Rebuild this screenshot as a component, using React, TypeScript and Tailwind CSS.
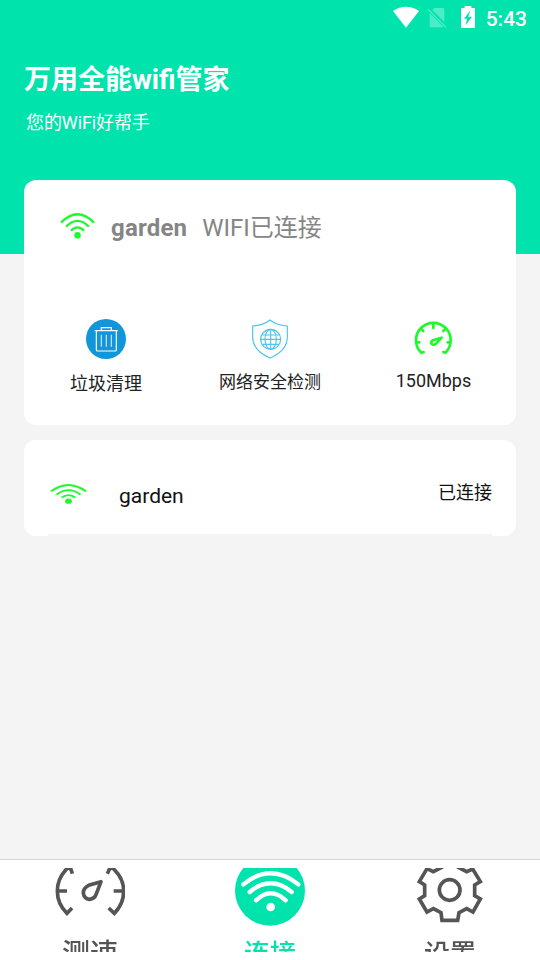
import type { ReactNode } from "react";

function StatusBar() {
  return (
    <div className="flex h-9 items-start justify-end pr-[13px] pt-[6px] text-white">
      <svg className="h-[22px] w-[26px]" viewBox="0 0 78 66">
        <path d="M0 15Q39-10 78 15L39 65Z" fill="currentColor" />
      </svg>
      <svg className="ml-[8px] h-[22px] w-5" viewBox="0 0 60 66">
        <path d="M16 12L22 6H48Q52 6 52 10V48ZM8 21L49 62Q48 64 46 64H11Q8 64 8 61Z" fill="#4decc8" />
        <path d="M3 10L58 65" stroke="#4decc8" strokeWidth="4" />
      </svg>
      <svg className="ml-[14px] h-[22px] w-[14px]" viewBox="0 0 42 66">
        <path d="M0 6H11V0H31V6H42V66H0Z" fill="currentColor" />
        <path d="M28 13L9 38H18L14 58L33 32H22Z" fill="#00e3ac" />
      </svg>
      <span className="ml-[11px] mt-[1px] text-[21px] font-medium leading-6">5:43</span>
    </div>
  );
}

function WifiIcon({ className }: { className: string }) {
  return (
    <svg className={className} viewBox="0 0 108 78" preserveAspectRatio="none" fill="none" stroke="#1cfa2c" strokeWidth="7">
      <path d="M3 29Q54-21 105 29M19 41Q54 6 89 41M34 53Q54 33 74 53" />
      <circle cx="54" cy="67" r="10" fill="#1cfa2c" stroke="none" />
    </svg>
  );
}

function TrashIcon() {
  return (
    <svg className="h-10 w-10" viewBox="0 0 120 120" fill="none" stroke="#fff">
      <circle cx="60" cy="60" r="60" fill="#1296db" stroke="none" />
      <path d="M26 35H95M46 34V26H76V34M31 36V92Q31 96 35 96H87Q91 96 91 92V36" strokeWidth="3.5" />
      <path d="M46 47V83M61 47V83M76 47V83" strokeWidth="3.5" stroke="#cfe6f3" />
    </svg>
  );
}

function ShieldIcon() {
  return (
    <svg className="h-10 w-10" viewBox="0 0 120 120" fill="none" stroke="#4cc5ec" strokeWidth="3.5">
      <path d="M60 3Q42 18 8 21V54Q8 95 60 117Q112 95 112 54V21Q78 18 60 3Z" />
      <circle cx="62" cy="61" r="30" />
      <ellipse cx="62" cy="61" rx="17" ry="30" />
      <path d="M62 31V91M32 61H92M37 48H87M37 76H87" />
    </svg>
  );
}

function SpeedIcon() {
  return (
    <svg className="h-10 w-10" viewBox="132 39 120 120" fill="none" stroke="#1cfa2c" strokeWidth="8" strokeLinecap="round">
      <path d="M161 138L154 140A52 52 0 1 1 226 140L220 138" />
      <path d="M190 56V66M156 71L160 75M224 71L220 75M140 109H148M240 109H233" />
      <path d="M215 95L188 103Q181 108 185 114Q191 119 198 113Z" strokeWidth="8" strokeLinejoin="round" />
    </svg>
  );
}

function Action({ icon, label, className }: { icon: ReactNode; label: string; className: string }) {
  return (
    <div className="flex w-[164px] flex-col items-center">
      {icon}
      <span className={`whitespace-nowrap leading-6 text-[#222] ${className}`}>{label}</span>
    </div>
  );
}

function NavItem({ label, className, children }: { label: string; className: string; children: ReactNode }) {
  return (
    <button className="flex h-[84px] w-[180px] flex-col items-center overflow-hidden">
      <svg className="h-[62px] w-[70px] shrink-0 blur-[0.6px]" viewBox="165 54 210 186" fill="none" stroke="#555" strokeWidth="11">
        {children}
      </svg>
      <span className={`shrink-0 font-medium leading-7 blur-[0.6px] ${className}`}>{label}</span>
    </button>
  );
}

export default function App() {
  return (
    <div className="flex h-[960px] w-[540px] flex-col overflow-hidden bg-[#f4f4f4] font-[Roboto,'Noto_Sans_CJK_SC',sans-serif]">
      <header className="h-[254px] shrink-0 bg-[#00e3ac] text-white">
        <StatusBar />
        <h1 className="ml-6 mt-6 text-[27px] font-bold leading-10">万用全能wifi管家</h1>
        <p className="ml-[26px] mt-[9px] text-[18px] leading-7 tracking-[-0.1px]">您的WiFi好帮手</p>
      </header>

      <main className="-mt-[74px] flex grow flex-col gap-[15px] px-6">
        <section className="h-[245px] rounded-xl bg-white">
          <div className="flex h-[95px] items-center pl-9 text-2xl text-[#858585]">
            <WifiIcon className="-mt-[4px] h-[26px] w-[35px]" />
            <span className="ml-4 font-bold tracking-[0.2px]">garden</span>
            <span className="ml-[15px]">WIFI已连接</span>
          </div>
          <div className="mt-[44px] flex">
            <Action icon={<TrashIcon />} label="垃圾清理" className="mt-[13px] text-[18px]" />
            <Action icon={<ShieldIcon />} label="网络安全检测" className="mt-[11px] text-[17px]" />
            <Action icon={<SpeedIcon />} label="150Mbps" className="mt-[10px] pr-px text-[18px]" />
          </div>
        </section>

        <section className="flex h-24 flex-col rounded-xl bg-white px-6">
          <div className="flex h-[94px] items-center text-[#111]">
            <WifiIcon className="ml-[2px] mt-[14px] h-[20px] w-[37px]" />
            <span className="ml-8 mt-5 text-[21px]">garden</span>
            <span className="ml-auto mt-[10px] text-[18px]">已连接</span>
          </div>
          <div className="h-[2px] bg-[#f4f4f4]" />
        </section>
      </main>

      <nav className="flex h-[101px] shrink-0 border-t border-[#d4d4d4] bg-white pt-2">
        <NavItem label="测速" className="mt-[11px] text-[28px] text-[#555]">
          <path d="M217 71L213 58Q206 50 197 60Q172 88 172 123Q172 162 201 190L216 174M322 71L328 58Q336 50 344 60Q371 88 371 123Q371 162 343 190L326 174" />
          <path d="M172 123H201M341 123H371" />
          <path d="M303 95L266 106Q249 115 250 130Q253 146 268 148Q284 146 288 134Z" strokeLinejoin="round" />
        </NavItem>
        <NavItem label="连接" className="mt-[10px] text-[26px] text-[#00e3ac]">
          <circle cx="270" cy="122" r="105" fill="#00e3ac" stroke="none" />
          <g stroke="#fff" strokeWidth="13" strokeLinecap="round">
            <path d="M190 103Q272 37 355 103M209 126Q272 74 335 126M228 151Q272 108 317 151" />
          </g>
          <circle cx="272" cy="171" r="13" fill="#fff" stroke="none" />
        </NavItem>
        <NavItem label="设置" className="mt-[10px] text-[26px] text-[#555]">
          <circle cx="269" cy="120" r="31" />
          <path d="M245 30V52L220 65L201 56L178 95L194 105V137L178 147L201 186L220 176L243 188L246 211H293L297 188L320 176L339 186L361 147L344 137V105L361 95L338 57L320 65L295 52V30Z" />
        </NavItem>
      </nav>
    </div>
  );
}
